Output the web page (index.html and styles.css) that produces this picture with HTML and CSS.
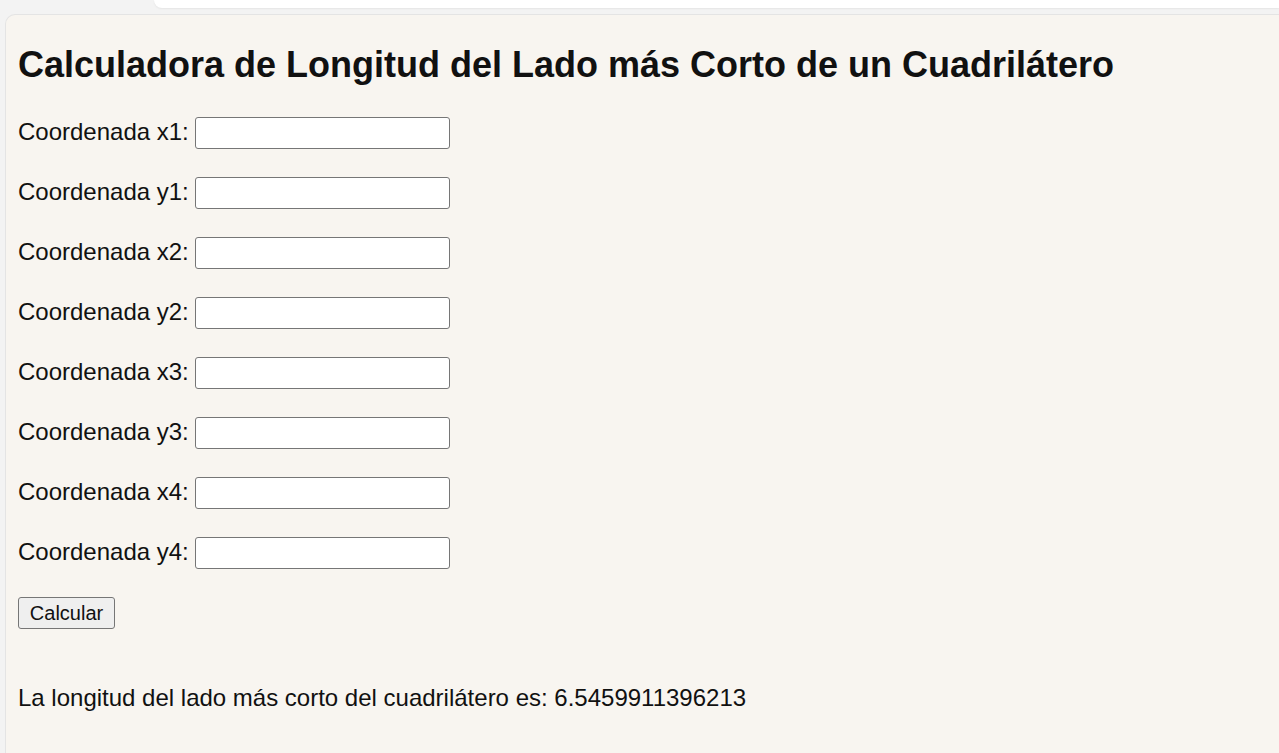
FILE: index.html
```html
<!DOCTYPE html>
<html lang="es">
<head>
<meta charset="utf-8">
<title>Calculadora de Longitud del Lado más Corto de un Cuadrilátero</title>
<link rel="stylesheet" href="styles.css">
</head>
<body>
<div class="topbar"></div>
<main class="panel">
  <h1 class="title">Calculadora de Longitud del Lado más Corto de un Cuadrilátero</h1>
  <form class="form">
    <div class="row"><label for="x1">Coordenada x1:</label><input id="x1" class="field" type="text"></div>
    <div class="row"><label for="y1">Coordenada y1:</label><input id="y1" class="field" type="text"></div>
    <div class="row"><label for="x2">Coordenada x2:</label><input id="x2" class="field" type="text"></div>
    <div class="row"><label for="y2">Coordenada y2:</label><input id="y2" class="field" type="text"></div>
    <div class="row"><label for="x3">Coordenada x3:</label><input id="x3" class="field" type="text"></div>
    <div class="row"><label for="y3">Coordenada y3:</label><input id="y3" class="field" type="text"></div>
    <div class="row"><label for="x4">Coordenada x4:</label><input id="x4" class="field" type="text"></div>
    <div class="row"><label for="y4">Coordenada y4:</label><input id="y4" class="field" type="text"></div>
    <button type="button" class="btn">Calcular</button>
  </form>
  <p class="result">La longitud del lado más corto del cuadrilátero es: 6.5459911396213</p>
</main>
</body>
</html>
```
FILE: styles.css
```css
html, body {
  margin: 0;
  padding: 0;
  height: 100%;
}
body {
  background: #f3f3f3;
  font-family: "Liberation Sans", Arial, sans-serif;
  color: #111;
  overflow: hidden;
  display: flex;
  flex-direction: column;
}
.topbar {
  height: 8px;
  margin-left: 154px;
  background: #ffffff;
  border-bottom-left-radius: 10px;
  box-shadow: 0 1px 2px rgba(0,0,0,0.06);
  flex: none;
}
.panel {
  flex: 1;
  margin-top: 6px;
  margin-left: 5px;
  background: #f8f5f0;
  border-top: 1px solid #e4e4e4;
  border-left: 1px solid #e4e4e4;
  border-top-left-radius: 10px;
  padding: 0 12px;
}
.title {
  font-size: 36px;
  line-height: 41px;
  font-weight: bold;
  margin: 29px 0 32px 0;
  color: #111;
}
.form {
  margin: 0;
}
.row {
  display: flex;
  align-items: center;
  height: 32px;
  margin-bottom: 28px;
  font-size: 24px;
}
.row label {
  margin-right: 6px;
  position: relative;
  top: -1px;
}
.field {
  width: 255px;
  height: 32px;
  box-sizing: border-box;
  border: 1px solid #767676;
  border-radius: 3px;
  background: #fff;
  padding: 2px 4px;
  font-size: 20px;
  font-family: inherit;
}
.btn {
  display: block;
  width: 97px;
  height: 32px;
  box-sizing: border-box;
  border: 1px solid #767676;
  border-radius: 3px;
  background: #efefef;
  font-family: "Liberation Sans", Arial, sans-serif;
  font-size: 20px;
  color: #111;
  padding: 0;
}
.result {
  font-size: 24px;
  line-height: 28px;
  margin: 55px 0 0 0;
}
```
